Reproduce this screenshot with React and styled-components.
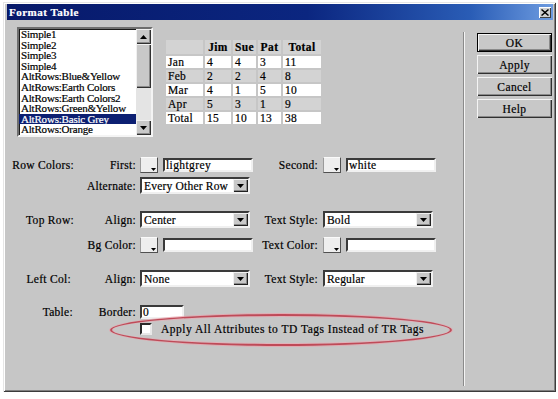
import React from 'react';
import styled, { createGlobalStyle } from 'styled-components';

const GlobalStyle = createGlobalStyle`
  html, body {
    margin: 0;
    padding: 0;
    background: #fff;
  }
  body {
    font-family: "Liberation Serif", "Times New Roman", serif;
    font-size: 11.5px;
    color: #000;
    -webkit-text-stroke: 0.2px currentColor;
  }
  * { box-sizing: border-box; }
`;

const Page = styled.div`
  width: 558px;
  height: 399px;
  padding: 2px 2px 0 3px;
`;

const Window = styled.div`
  width: 553px;
  height: 390px;
  background: #c6c6c6;
  padding: 2px 3px 3px 4px;
  display: flex;
  flex-direction: column;
  box-shadow: inset 1px 1px #e6e6e6, inset -1px -1px #3c3c3c,
    inset 2px 2px #fff, inset -2px -2px #808080;
`;

const TitleBar = styled.div`
  height: 16px;
  display: flex;
  align-items: center;
  justify-content: space-between;
  padding: 0 2px 0 2px;
  background: linear-gradient(90deg, #07196a 0%, #0b2680 55%, #2a5db6 85%, #6d9be0 100%);
`;

const Title = styled.span`
  color: #fff;
  font-size: 11px;
  font-weight: bold;
  letter-spacing: 0.5px;
`;

const CloseBox = styled.div`
  width: 12px;
  height: 11px;
  background: #d0d0d0;
  display: flex;
  align-items: center;
  justify-content: center;
  box-shadow: inset 1px 1px #fff, inset -1px -1px #404040;
`;

const Body = styled.div`
  flex: 1;
  display: flex;
`;

const LeftPanel = styled.div`
  width: 456px;
  display: flex;
  flex-direction: column;
`;

const TopSection = styled.div`
  display: flex;
  align-items: flex-start;
  gap: 11px;
  padding: 7px 0 0 10px;
`;

const ListBox = styled.div`
  width: 136px;
  height: 110px;
  background: #fff;
  display: flex;
  border: 2px solid;
  border-color: #6e6e6e #f4f4f4 #f4f4f4 #6e6e6e;
  box-shadow: inset 1px 1px #1a1a1a;
`;

const ListItems = styled.div`
  flex: 1;
  overflow: hidden;
`;

const ListItem = styled.div`
  height: 10.6px;
  line-height: 10.6px;
  padding-left: 2px;
  font-size: 11px;
  letter-spacing: -0.2px;
  white-space: nowrap;
  background: ${p => (p.$selected ? '#0c1f72' : 'transparent')};
  color: ${p => (p.$selected ? '#fff' : '#000')};
`;

const ScrollBar = styled.div`
  width: 15px;
  display: flex;
  flex-direction: column;
  background: #e4e4e4;
`;

const ScrollButton = styled.div`
  height: 15px;
  background: #c8c8c8;
  display: flex;
  align-items: center;
  justify-content: center;
  box-shadow: inset 1px 1px #f0f0f0, inset -1px -1px #303030, inset -2px -2px #8a8a8a;
`;

const Thumb = styled.div`
  height: 44px;
  background: #c8c8c8;
  box-shadow: inset 1px 1px #f0f0f0, inset -1px -1px #303030, inset -2px -2px #8a8a8a;
`;

const Track = styled.div`
  flex: 1;
`;

const Preview = styled.table`
  margin-top: 11px;
  border-collapse: separate;
  border-spacing: 2px;
  line-height: 12px;
`;

const HeadCell = styled.th`
  width: ${p => p.$w}px;
  height: 14px;
  padding: 0;
  background: #d3d3d3;
  font-weight: bold;
  text-align: center;
  letter-spacing: 0.4px;
`;

const Cell = styled.td`
  height: 12px;
  padding: 0 2px;
  background: ${p => (p.$alt ? '#d3d3d3' : '#fff')};
  letter-spacing: 0.3px;
`;

const FormRow = styled.div`
  position: relative;
  display: grid;
  grid-template-columns: 68px 65px 113px 70px 115px;
  align-items: center;
  height: ${p => p.$h || 17}px;
  margin-top: ${p => p.$mt}px;
`;

const Label = styled.span`
  grid-column: ${p => p.$col};
  text-align: right;
  white-space: nowrap;
  padding-right: ${p => p.$pr || 4}px;
  letter-spacing: 0.3px;
`;

const ColorField = styled.div`
  grid-column: ${p => p.$col};
  display: flex;
  align-items: center;
  gap: 5px;
`;

const Swatch = styled.div`
  width: 18px;
  height: 16px;
  background: #eeeeee;
  border: 1px solid;
  border-color: #fafafa #505050 #505050 #9a9a9a;
  display: flex;
  align-items: flex-end;
  justify-content: flex-end;
  padding: 0 1px 1px 0;
`;

const TextBox = styled.div`
  grid-column: ${p => p.$col || 'auto'};
  width: ${p => p.$w || 90}px;
  height: 14px;
  background: #fff;
  border: 2px solid;
  border-color: #3a3a3a #f0f0f0 #f0f0f0 #3a3a3a;
  padding-left: 1px;
  line-height: 10px;
  white-space: nowrap;
  letter-spacing: 0.4px;
`;

const Select = styled.div`
  grid-column: ${p => p.$col};
  width: 110px;
  height: 17px;
  background: #fff;
  border: 2px solid;
  border-color: #3a3a3a #f0f0f0 #f0f0f0 #3a3a3a;
  display: flex;
  align-items: center;
`;

const SelectText = styled.span`
  flex: 1;
  padding-left: 2px;
  letter-spacing: 0.2px;
  white-space: nowrap;
`;

const DropButton = styled.div`
  width: 15px;
  height: 13px;
  background: #c8c8c8;
  display: flex;
  align-items: center;
  justify-content: center;
  box-shadow: inset 1px 1px #f0f0f0, inset -1px -1px #202020, inset -2px -2px #8a8a8a;
`;

const CheckRow = styled.div`
  grid-column: 3 / -1;
  display: flex;
  align-items: center;
`;

const CheckBox = styled.div`
  width: 12px;
  height: 12px;
  background: #fff;
  border: 2px solid;
  border-color: #2a2a2a #e8e8e8 #e8e8e8 #2a2a2a;
`;

const CheckLabel = styled.span`
  margin-left: 9px;
  white-space: nowrap;
  letter-spacing: 0.5px;
`;

const Highlight = styled.div`
  position: absolute;
  left: 103px;
  top: -8px;
  width: 342px;
  height: 32px;
  border: 2px solid #c04a58;
  border-radius: 50%;
  box-shadow: 0 0 0 1px rgba(236, 160, 170, 0.7), inset 0 0 0 1px rgba(236, 170, 180, 0.7);
  pointer-events: none;
`;

const Separator = styled.div`
  width: 2px;
  margin: 12px 0 3px;
  border-left: 1px solid #8a8a8a;
  border-right: 1px solid #f4f4f4;
`;

const ButtonColumn = styled.div`
  display: flex;
  flex-direction: column;
  gap: 3px;
  padding: 13px 0 0 12px;
`;

const Button = styled.button`
  width: 75px;
  height: 19px;
  padding: 0;
  margin: 0;
  border: ${p => (p.$default ? '1px solid #000' : 'none')};
  background: #c8c8c8;
  font-family: "Liberation Serif", "Times New Roman", serif;
  font-size: 11.5px;
  letter-spacing: 0.4px;
  color: #000;
  -webkit-text-stroke: 0.2px #000;
  box-shadow: inset 1px 1px #f4f4f4, inset -1px -1px #303030, inset -2px -2px #8a8a8a;
`;

const Arrow = ({ down }) => (
  <svg width="7" height="4" viewBox="0 0 7 4">
    <path d={down ? 'M0 0h7L3.5 4z' : 'M0 4h7L3.5 0z'} fill="#000" />
  </svg>
);

const SwatchTab = () => (
  <svg width="5" height="3" viewBox="0 0 5 3">
    <path d="M0 0h5L2.5 3z" fill="#000" />
  </svg>
);

const styles = [
  'Simple1',
  'Simple2',
  'Simple3',
  'Simple4',
  'AltRows:Blue&Yellow',
  'AltRows:Earth Colors',
  'AltRows:Earth Colors2',
  'AltRows:Green&Yellow',
  'AltRows:Basic Grey',
  'AltRows:Orange',
];

const rows = [
  ['Jan', 4, 4, 3, 11],
  ['Feb', 2, 2, 4, 8],
  ['Mar', 4, 1, 5, 10],
  ['Apr', 5, 3, 1, 9],
  ['Total', 15, 10, 13, 38],
];

const ColorPicker = ({ col, value }) => (
  <ColorField $col={col}>
    <Swatch>
      <SwatchTab />
    </Swatch>
    <TextBox>{value}</TextBox>
  </ColorField>
);

const Dropdown = ({ col, value }) => (
  <Select $col={col}>
    <SelectText>{value}</SelectText>
    <DropButton>
      <Arrow down />
    </DropButton>
  </Select>
);

export default function App() {
  return (
    <Page>
      <GlobalStyle />
      <Window>
        <TitleBar>
          <Title>Format Table</Title>
          <CloseBox>
            <svg width="8" height="7" viewBox="0 0 8 7">
              <path d="M1 0l3 2.5L7 0l1 1-3 2.5L8 6 7 7 4 4.5 1 7 0 6l3-2.5L0 1z" fill="#000" />
            </svg>
          </CloseBox>
        </TitleBar>
        <Body>
          <LeftPanel>
            <TopSection>
              <ListBox>
                <ListItems>
                  {styles.map(s => (
                    <ListItem key={s} $selected={s === 'AltRows:Basic Grey'}>{s}</ListItem>
                  ))}
                </ListItems>
                <ScrollBar>
                  <ScrollButton><Arrow /></ScrollButton>
                  <Thumb />
                  <Track />
                  <ScrollButton><Arrow down /></ScrollButton>
                </ScrollBar>
              </ListBox>
              <Preview>
                <thead>
                  <tr>
                    <HeadCell $w={37}></HeadCell>
                    <HeadCell $w={26}>Jim</HeadCell>
                    <HeadCell $w={23}>Sue</HeadCell>
                    <HeadCell $w={23}>Pat</HeadCell>
                    <HeadCell $w={38}>Total</HeadCell>
                  </tr>
                </thead>
                <tbody>
                  {rows.map((r, i) => (
                    <tr key={r[0]}>
                      {r.map((v, j) => (
                        <Cell key={j} $alt={i % 2 === 1}>{v}</Cell>
                      ))}
                    </tr>
                  ))}
                </tbody>
              </Preview>
            </TopSection>

            <FormRow $mt={19}>
              <Label $col={1} $pr={1}>Row Colors:</Label>
              <Label $col={2}>First:</Label>
              <ColorPicker col={3} value="lightgrey" />
              <Label $col={4} $pr={5}>Second:</Label>
              <ColorPicker col={5} value="white" />
            </FormRow>
            <FormRow $mt={4}>
              <Label $col={2}>Alternate:</Label>
              <Dropdown col={3} value="Every Other Row" />
            </FormRow>

            <FormRow $mt={17}>
              <Label $col={1} $pr={1}>Top Row:</Label>
              <Label $col={2}>Align:</Label>
              <Dropdown col={3} value="Center" />
              <Label $col={4} $pr={5}>Text Style:</Label>
              <Dropdown col={5} value="Bold" />
            </FormRow>
            <FormRow $mt={8}>
              <Label $col={2}>Bg Color:</Label>
              <ColorPicker col={3} value="" />
              <Label $col={4} $pr={5}>Text Color:</Label>
              <ColorPicker col={5} value="" />
            </FormRow>

            <FormRow $mt={17}>
              <Label $col={1} $pr={4}>Left Col:</Label>
              <Label $col={2}>Align:</Label>
              <Dropdown col={3} value="None" />
              <Label $col={4} $pr={5}>Text Style:</Label>
              <Dropdown col={5} value="Regular" />
            </FormRow>

            <FormRow $mt={16}>
              <Label $col={1} $pr={2}>Table:</Label>
              <Label $col={2}>Border:</Label>
              <TextBox $col={3} $w={44}>0</TextBox>
            </FormRow>
            <FormRow $mt={2} $h={13}>
              <CheckRow>
                <CheckBox />
                <CheckLabel>Apply All Attributes to TD Tags Instead of TR Tags</CheckLabel>
              </CheckRow>
              <Highlight />
            </FormRow>
          </LeftPanel>
          <Separator />
          <ButtonColumn>
            <Button $default>OK</Button>
            <Button>Apply</Button>
            <Button>Cancel</Button>
            <Button>Help</Button>
          </ButtonColumn>
        </Body>
      </Window>
    </Page>
  );
}
